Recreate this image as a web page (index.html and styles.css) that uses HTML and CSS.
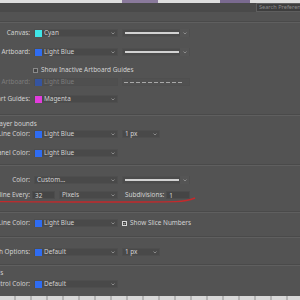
FILE: index.html
```html
<!DOCTYPE html>
<html lang="en">
<head>
    <meta charset="UTF-8">
    <title>Preferences - Guides, Grid &amp; Slices</title>
    <link rel="stylesheet" href="styles.css">
</head>
<body>
    <div class="strip strip-top">
        <span class="blob blob-a"></span>
        <span class="blob blob-b"></span>
    </div>
    <div class="header">
        <div class="search">Search Preferences</div>
    </div>
    <div class="rule rule-head"></div>

    <!-- Artboards / Guides -->
    <div class="row r-canvas">
        <div class="label"><span>Canvas:</span></div>
        <div class="select"><i class="sw cyan"></i>Cyan<svg class="chev" viewBox="0 0 4 3"><path d="M0.5 0.5 2 2 3.5 0.5"/></svg></div>
        <div class="slider"><i class="track"></i><span class="knob"><svg class="chev" viewBox="0 0 4 3"><path d="M0.5 0.5 2 2 3.5 0.5"/></svg></span></div>
    </div>
    <div class="row r-artboard">
        <div class="label"><span>Artboard:</span></div>
        <div class="select"><i class="sw blue"></i>Light Blue<svg class="chev" viewBox="0 0 4 3"><path d="M0.5 0.5 2 2 3.5 0.5"/></svg></div>
        <div class="slider"><i class="track"></i><span class="knob"><svg class="chev" viewBox="0 0 4 3"><path d="M0.5 0.5 2 2 3.5 0.5"/></svg></span></div>
    </div>
    <div class="row r-check">
        <div class="label"></div>
        <label class="check wide"><i class="box"></i>Show Inactive Artboard Guides</label>
    </div>
    <div class="row r-inactive disabled">
        <div class="label"><span>Inactive Artboard:</span></div>
        <div class="select"><i class="sw blue"></i>Light Blue</div>
        <div class="slider dashed"><i class="dash"></i></div>
    </div>
    <div class="row r-smart">
        <div class="label"><span>Smart Guides:</span></div>
        <div class="select"><i class="sw magenta"></i>Magenta<svg class="chev" viewBox="0 0 4 3"><path d="M0.5 0.5 2 2 3.5 0.5"/></svg></div>
    </div>

    <div class="rule r-sep1"></div>

    <!-- Layer bounds -->
    <div class="title t-bounds">Layer bounds</div>
    <div class="row r-bline">
        <div class="label"><span>Line Color:</span></div>
        <div class="select"><i class="sw blue"></i>Light Blue<svg class="chev" viewBox="0 0 4 3"><path d="M0.5 0.5 2 2 3.5 0.5"/></svg></div>
        <div class="select small">1 px<svg class="chev" viewBox="0 0 4 3"><path d="M0.5 0.5 2 2 3.5 0.5"/></svg></div>
    </div>
    <div class="row r-panel">
        <div class="label"><span>Panel Color:</span></div>
        <div class="select"><i class="sw blue"></i>Light Blue<svg class="chev" viewBox="0 0 4 3"><path d="M0.5 0.5 2 2 3.5 0.5"/></svg></div>
    </div>

    <div class="rule r-sep2"></div>

    <!-- Grid -->
    <div class="row r-color">
        <div class="label"><span>Color:</span></div>
        <div class="select plain">Custom...<svg class="chev" viewBox="0 0 4 3"><path d="M0.5 0.5 2 2 3.5 0.5"/></svg></div>
        <div class="slider"><i class="track"></i><span class="knob"><svg class="chev" viewBox="0 0 4 3"><path d="M0.5 0.5 2 2 3.5 0.5"/></svg></span></div>
    </div>
    <div class="row r-gridline">
        <div class="label"><span>Gridline Every:</span></div>
        <div class="pair">
            <div class="input num">32</div>
            <div class="select plain grow">Pixels<svg class="chev" viewBox="0 0 4 3"><path d="M0.5 0.5 2 2 3.5 0.5"/></svg></div>
        </div>
        <div class="pair sub">
            <span class="sublabel">Subdivisions:</span>
            <div class="input grow">1</div>
        </div>
        <svg class="mark" viewBox="0 0 196 8"><path d="M0 5.6 C60 6 140 6.4 176 5.6 C184 5.3 190 4 195 2"/></svg>
    </div>

    <div class="rule r-sep3"></div>

    <!-- Slices -->
    <div class="row r-slice">
        <div class="label"><span>Line Color:</span></div>
        <div class="select"><i class="sw blue"></i>Light Blue<svg class="chev" viewBox="0 0 4 3"><path d="M0.5 0.5 2 2 3.5 0.5"/></svg></div>
        <label class="check"><i class="box on"><svg viewBox="0 0 5 5"><path d="M1 2.6 2.1 3.7 4 1.3"/></svg></i>Show Slice Numbers</label>
    </div>

    <div class="rule r-sep4"></div>

    <!-- Path options -->
    <div class="row r-path">
        <div class="label"><span>Path Options:</span></div>
        <div class="select"><i class="sw blue"></i>Default<svg class="chev" viewBox="0 0 4 3"><path d="M0.5 0.5 2 2 3.5 0.5"/></svg></div>
        <div class="select small">1 px<svg class="chev" viewBox="0 0 4 3"><path d="M0.5 0.5 2 2 3.5 0.5"/></svg></div>
    </div>

    <div class="rule r-sep5"></div>

    <!-- Controls -->
    <div class="title t-controls">Controls</div>
    <div class="row r-control">
        <div class="label"><span>Control Color:</span></div>
        <div class="select"><i class="sw blue"></i>Default<svg class="chev" viewBox="0 0 4 3"><path d="M0.5 0.5 2 2 3.5 0.5"/></svg></div>
    </div>

    <div class="strip strip-bottom"></div>
</body>
</html>
```
FILE: styles.css
```css
* {
    box-sizing: border-box;
    margin: 0;
    padding: 0;
}

body {
    width: 300px;
    height: 300px;
    overflow: hidden;
    background: #535353;
    color: #d2d2d2;
    font-family: 'Noto Sans', 'Open Sans', sans-serif;
    font-size: 6.4px;
    line-height: 8px;
}

/* top / bottom strips of the app behind */
.strip {
    height: 3px;
    background: #dedede;
    position: relative;
}

.blob {
    position: absolute;
    top: 0;
    height: 3px;
    background: #8a7a9c;
}

.blob-a { left: 122px; width: 36px; }
.blob-b { left: 220px; width: 30px; background: #7a6a90; }

.strip-bottom {
    margin-top: 8px;
    height: 4px;
    background: repeating-linear-gradient(90deg, #d8d8d8 0 14px, #b4b4b4 14px 16px);
}

.header {
    height: 9px;
    background: #4a4a4a;
    display: flex;
    justify-content: flex-end;
}

.search {
    width: 44px;
    height: 9px;
    background: #3e3e3e;
    border: 1px solid #5e5e5e;
    border-right: none;
    color: #8c8c8c;
    font-size: 5.6px;
    line-height: 7px;
    padding-left: 2px;
    white-space: nowrap;
    overflow: hidden;
}

.rule {
    height: 1px;
    background: #5f5f5f;
    box-shadow: 0 -1px 0 #4a4a4a;
}

.rule-head { margin-top: 10px; }

/* rows */
.row {
    display: grid;
    grid-template-columns: 30px 84px 68px;
    column-gap: 4px;
    height: 8px;
    align-items: center;
    position: relative;
}

.label {
    display: flex;
    justify-content: flex-end;
    overflow: hidden;
    white-space: nowrap;
}

.title {
    height: 8px;
    margin-left: -4px;
    white-space: nowrap;
}

.select {
    height: 8px;
    display: flex;
    align-items: center;
    gap: 2px;
    background: #494949;
    border: 1px solid #4e4e4e;
    white-space: nowrap;
    padding-left: 0;
}

.select.plain { padding-left: 2px; }

.select.small { width: 38px; padding-left: 2px; }

.chev {
    width: 4px;
    height: 3px;
    margin-left: auto;
    margin-right: 2px;
    fill: none;
    stroke: #9a9a9a;
    stroke-width: 0.8;
}

.sw {
    width: 7px;
    height: 7px;
    flex: none;
}

.cyan { background: #3fe6e8; }
.blue { background: #2f6cf2; }
.magenta { background: #e23cdc; }

.slider {
    height: 8px;
    display: flex;
    align-items: center;
    background: #4b4b4b;
    border: 1px solid #4f4f4f;
}

.track {
    flex: 1;
    height: 2px;
    margin-left: 2px;
    background: #d2d2d2;
}

.knob {
    width: 9px;
    height: 8px;
    display: flex;
    align-items: center;
    justify-content: center;
    margin-left: 1px;
    background: #555;
}

.knob .chev { margin: 0; }

.dash {
    flex: 1;
    height: 1px;
    margin: 0 5px 0 1px;
    background: repeating-linear-gradient(90deg, #a8a8a8 0 4px, transparent 4px 6px);
}

.disabled .label,
.disabled .select { color: #7c7c7c; }

.disabled .select { background: #4f4f4f; }

.disabled .sw { background: #3554a0; }

.disabled .slider { background: #515151; }

.check {
    display: flex;
    align-items: center;
    gap: 3px;
    white-space: nowrap;
}

.check.wide { grid-column: 2 / 4; margin-left: -1px; }

.box {
    width: 5px;
    height: 5px;
    border: 1px solid #8a8a8a;
    background: #454545;
    display: flex;
}

.box.on {
    border-color: #d8d8d8;
    background: #3a3a3a;
}

.box svg {
    width: 3px;
    height: 3px;
    fill: none;
    stroke: #eee;
    stroke-width: 1.2;
}

.pair {
    display: flex;
    align-items: center;
    gap: 4px;
}

.grow { flex: 1; }

.input {
    height: 8px;
    background: #454545;
    border: 1px solid #4c4c4c;
    padding-left: 2px;
}

.input.num { width: 23px; flex: none; margin-left: -2px; }

.sub { margin-left: 3px; gap: 2px; }

.sublabel { white-space: nowrap; }

.mark {
    position: absolute;
    left: 0;
    top: 5px;
    width: 196px;
    height: 8px;
    fill: none;
    stroke: #c42a2c;
    stroke-width: 1.4;
}

/* vertical rhythm */
.r-canvas { margin-top: 6px; }
.r-artboard { margin-top: 11px; }
.r-check { margin-top: 10px; }
.r-inactive { margin-top: 4px; }
.r-smart { margin-top: 9px; }
.r-sep1 { margin-top: 12px; }
.t-bounds { margin-top: 4px; }
.r-bline { margin-top: 2px; }
.r-panel { margin-top: 11px; }
.r-sep2 { margin-top: 8px; }
.r-color { margin-top: 10px; }
.r-gridline { margin-top: 7px; }
.r-sep3 { margin-top: 13px; }
.r-slice { margin-top: 6px; }
.r-sep4 { margin-top: 10px; }
.r-path { margin-top: 10px; }
.r-sep5 { margin-top: 9px; }
.t-controls { margin-top: 3px; margin-left: -22px; }
.r-control { margin-top: 3px; }
```
